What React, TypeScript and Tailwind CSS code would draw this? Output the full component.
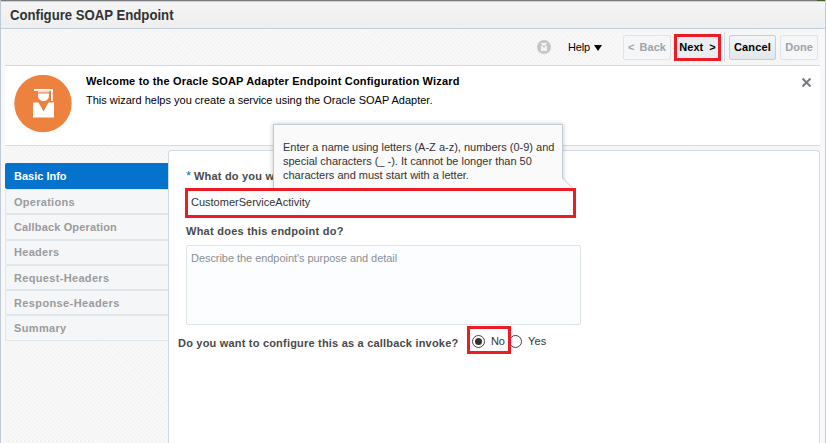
import React from "react";

const hatch =
  "bg-[repeating-linear-gradient(45deg,#f9f9f9_0px,#f9f9f9_1.4px,#f3f3f3_1.4px,#f3f3f3_2.8px)]";

const steps = [
  { label: "Operations", tracking: "tracking-[0.27px]" },
  { label: "Callback Operation", tracking: "tracking-[0.15px]" },
  { label: "Headers", tracking: "tracking-[0.3px]" },
  { label: "Request-Headers", tracking: "tracking-[0.33px]" },
  { label: "Response-Headers", tracking: "tracking-[0.38px]" },
  { label: "Summary", tracking: "tracking-[0.35px]" },
];

function Graduate() {
  return (
    <svg viewBox="0 0 58 58" className="h-[58px] w-[58px] shrink-0">
      <circle cx="29" cy="28.500" r="28.700" fill="#ed813e" />
      <path d="M20 14h19v2H20zM37 15h1.800v11H37zM24 18.500h11v2c0 3.500-2.500 5.500-5.500 5.500s-5.500-2-5.500-5.500z" fill="#fff" />
      <path d="M24 15.500h11v2H24z" fill="#f8d6c2" />
      <path d="M19 27.500h5.500l5 9 5-9H40v15H19z" fill="#fff" />
    </svg>
  );
}

function SmallBadge() {
  return (
    <svg viewBox="0 0 14 14" className="h-[14px] w-[14px] shrink-0">
      <circle cx="7" cy="7" r="7" fill="#c6c6c6" />
      <path d="M4 3h6v1H9v1.500H5V4H4zM4 6h1.500L7 8l1.500-2H10v5H4z" fill="#f4f4f4" />
    </svg>
  );
}

function Radio({ checked }: { checked?: boolean }) {
  return (
    <span className="flex h-[13px] w-[13px] shrink-0 items-center justify-center rounded-full border border-[#444] bg-white">
      {checked && <span className="h-[7px] w-[7px] rounded-full bg-[#333]" />}
    </span>
  );
}

export default function App() {
  return (
    <div
      className="relative flex h-[443px] w-[826px] flex-col overflow-hidden border-x border-[#bfcad6] bg-[#f8f8f8] text-[11px] leading-[14px] text-[#333]"
      style={{ fontFamily: '"Liberation Sans", Arial, sans-serif' }}
    >
      <div className="-mx-px flex h-px shrink-0 justify-end bg-[#777b80]">
        <div className="w-[9px] bg-[#486018]" />
      </div>
      <header className="flex h-[28px] shrink-0 items-center border-t border-b border-t-[#c9cfd6] border-b-[#c0ccd9] bg-linear-to-b from-[#f5f5f5] to-[#eeeeee] pl-[9px]">
        <h1 className="origin-left scale-x-[0.94] whitespace-nowrap text-[14px] font-bold text-[#333]">Configure SOAP Endpoint</h1>
      </header>

      <div className={`mr-[5px] ml-[4px] flex h-[37px] shrink-0 items-center border-b border-[#d3dbe4] ${hatch}`}>
        <div className="ml-[532px] flex items-center">
          <SmallBadge />
          <span className="ml-[17px] w-[26px] whitespace-nowrap tracking-[-0.2px] text-black">Help</span>
          <span className="mt-px h-0 w-0 border-x-4 border-t-[6px] border-x-transparent border-t-black" />
        </div>
        <button className="ml-[21px] h-[25px] w-[48px] shrink-0 whitespace-nowrap rounded-[2px] border border-[#dfe4e9] bg-[#f4f6f8] font-bold text-[#a0a3a6] [word-spacing:2px]">&lt; Back</button>
        <button className="ml-[3px] h-[27px] w-[47px] shrink-0 whitespace-nowrap border-[3px] border-[#ed1c24] bg-[#e9edf1] font-bold text-black [word-spacing:3px]">Next &gt;</button>
        <span className="ml-[3px] h-[30px] w-px shrink-0 bg-[#d3dbe4]" />
        <button className="ml-[4px] h-[25px] w-[47px] shrink-0 whitespace-nowrap rounded-[2px] border border-[#c3ced9] bg-linear-to-b from-[#f3f5f7] to-[#e2e7eb] font-bold tracking-[0.15px] text-black">Cancel</button>
        <button className="ml-[4px] h-[25px] w-[38px] shrink-0 whitespace-nowrap rounded-[2px] border border-[#dfe4e9] bg-[#f4f6f8] font-bold text-[#a0a3a6]">Done</button>
      </div>

      <section className="mr-[5px] ml-[4px] flex h-[80px] shrink-0 border-b border-[#d3dbe4] bg-white pt-[9px] pl-[9px]">
        <Graduate />
        <div className="ml-[14px] flex-1 whitespace-nowrap text-black">
          <h2 className="-mt-px font-bold tracking-[0.19px]">Welcome to the Oracle SOAP Adapter Endpoint Configuration Wizard</h2>
          <p className="mt-[5px]">This wizard helps you create a service using the Oracle SOAP Adapter.</p>
        </div>
        <svg viewBox="0 0 9 9" className="mt-[3px] mr-[9px] h-[9px] w-[9px]">
          <path d="M.5.500l8 8M8.500.500l-8 8" stroke="#777d84" strokeWidth="2.100" />
        </svg>
      </section>

      <div className={`mr-[5px] ml-[4px] flex flex-1 pt-[4px] ${hatch}`}>
        <nav className="w-[163px] shrink-0 pt-[13px] font-bold whitespace-nowrap">
          <div className="flex h-[26px] items-center rounded-l-[2px] bg-[#0572ce] pl-[9px] text-white">Basic Info</div>
          {steps.map((s) => (
            <div
              key={s.label}
              className={`flex h-[25.300px] items-center rounded-l-[2px] border-y border-l border-[#dfe6ec] bg-[#f4f6f8] pl-[8px] text-[#9b9b9b] ${s.tracking}`}
            >
              {s.label}
            </div>
          ))}
        </nav>
        <main className="flex flex-1 flex-col rounded-t-[4px] border border-b-0 border-[#d0dae4] bg-white">
          <div className="mt-[18px] ml-[17px] flex h-[14px] whitespace-nowrap font-bold text-[#4a4a4a]">
            <span className="w-[8px] text-[13px] font-normal text-[#0572ce]">*</span>
            <span className="tracking-[0.2px]">What do you w</span>
          </div>
          <div className="relative z-10 mt-[5px] ml-[16px] flex h-[30px] w-[391px] shrink-0 items-center border-[3px] border-[#ed1c24] bg-[#fcfdfe] pb-[2px] pl-[3px] text-[#333]">CustomerServiceActivity</div>
          <div className="mt-[6px] ml-[17px] whitespace-nowrap font-bold tracking-[0.25px] text-[#4a4a4a]">What does this endpoint do?</div>
          <div className="mt-[7px] ml-[17px] h-[80px] w-[395px] shrink-0 rounded-[2px] border border-[#dfe4e7] bg-[#fcfdfe] pt-[5px] pl-[4px] tracking-[-0.05px] text-[#8b8f94]">Describe the endpoint's purpose and detail</div>
          <div className="mt-px ml-[9px] flex h-[28px] items-center whitespace-nowrap">
            <span className="mt-[6px] w-[289px] font-bold tracking-[0.2px] text-[#4a4a4a]">Do you want to configure this as a callback invoke?</span>
            <div className="relative z-10 flex h-[28px] w-[44px] items-center border-[3px] border-[#ed1c24] pt-[2px] pl-[2px]">
              <Radio checked />
              <span className="ml-[6px] tracking-[-0.2px]">No</span>
            </div>
            <div className="-ml-[2px] flex items-center pt-[2px]">
              <Radio />
              <span className="ml-[6px] tracking-[0.2px]">Yes</span>
            </div>
          </div>
        </main>
      </div>

      <div className="absolute top-[124px] left-[272px] h-[64px] w-[290px] whitespace-nowrap border border-b-0 border-[#bfcad4] bg-[#fafafa] pt-[15px] pl-[9px] shadow-[0_0_5px_rgba(0,0,0,0.22)]">
        <p>Enter a name using letters (A-Z a-z), numbers (0-9) and</p>
        <p>special characters (_ -). It cannot be longer than 50</p>
        <p>characters and must start with a letter.</p>
        <svg viewBox="0 0 12 12" className="absolute top-[53px] left-[288px] h-[12px] w-[12px]">
          <path d="M0 0l10.500 10.500H0z" fill="#fafafa" />
          <path d="M.5 0l10.500 10.500" stroke="#bfcad4" />
        </svg>
      </div>
    </div>
  );
}
